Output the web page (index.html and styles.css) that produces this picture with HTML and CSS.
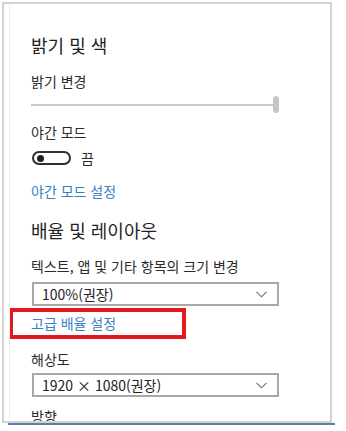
FILE: index.html
```html
<!DOCTYPE html>
<html lang="ko">
<head>
<meta charset="utf-8">
<link rel="stylesheet" href="styles.css">
</head>
<body>
<div class="window">
  <div class="content">
    <h1 class="heading first">밝기 및 색</h1>
    <div class="label l-bright">밝기 변경</div>
    <div class="slider">
      <div class="track"></div>
      <div class="thumb"></div>
    </div>
    <div class="label l-night">야간 모드</div>
    <div class="toggle-row">
      <span class="toggle"><span class="dot"></span></span>
      <span class="toggle-text">끔</span>
    </div>
    <a class="link l-nightset">야간 모드 설정</a>
    <h1 class="heading second">배율 및 레이아웃</h1>
    <div class="label l-text">텍스트, 앱 및 기타 항목의 크기 변경</div>
    <div class="select s-scale">
      <span>100%(권장)</span>
      <svg class="chev" width="11" height="7" viewBox="0 0 11 7"><path d="M0.5 0.8 L5.5 5.8 L10.5 0.8" fill="none" stroke="#6f6f6f" stroke-width="1.1"/></svg>
    </div>
    <div class="highlight"><a class="link">고급 배율 설정</a></div>
    <div class="label l-res">해상도</div>
    <div class="select s-res">
      <span>1920 × 1080(권장)</span>
      <svg class="chev" width="11" height="7" viewBox="0 0 11 7"><path d="M0.5 0.8 L5.5 5.8 L10.5 0.8" fill="none" stroke="#6f6f6f" stroke-width="1.1"/></svg>
    </div>
    <div class="label l-dir">방향</div>
  </div>
</div>
<div class="underline"></div>
</body>
</html>
```

FILE: styles.css
```css
html, body {
  margin: 0;
  padding: 0;
  background: #ffffff;
}
body {
  font-family: "Noto Sans CJK KR", "Noto Sans", sans-serif;
  color: #2a2a2a;
}
.window {
  margin: 2px 0 0 2px;
  border: 2px solid #d2d2d2;
  padding-left: 5px;
  box-sizing: content-box;
  width: 321px;
}
.content {
  border-left: 1px solid #efefef;
  height: 417px;
  overflow: hidden;
  padding-left: 21px;
}
.underline {
  margin-left: 8px;
  width: 327px;
  height: 2px;
  background: #5f80ab;
}
.heading {
  margin: 0;
  font-size: 18px;
  font-weight: 400;
  line-height: 24px;
  color: #1f1f1f;
}
.heading.first { margin-top: 29px; }
.heading.second { margin-top: 17px; }
.label {
  font-size: 14px;
  line-height: 20px;
  color: #2a2a2a;
}
.l-bright { margin-top: 14px; }
.l-night { margin-top: 9px; }
.l-text { margin-top: 14px; }
.l-res { margin-top: 10px; }
.l-dir { margin-top: 9px; }
.slider {
  margin-top: 5px;
  width: 248px;
  height: 17px;
  display: flex;
  align-items: center;
}
.track {
  flex: 1;
  height: 2px;
  background: #c9c9c9;
}
.thumb {
  width: 6px;
  height: 17px;
  border-radius: 3px;
  background: #c6c6c6;
}
.toggle-row {
  margin-top: 9px;
  display: flex;
  align-items: center;
  margin-left: 1px;
  height: 14px;
}
.toggle {
  width: 39px;
  height: 14px;
  box-sizing: border-box;
  border: 2px solid #2e2e2e;
  border-radius: 7px;
  display: flex;
  align-items: center;
  padding-left: 3px;
}
.dot {
  width: 7px;
  height: 7px;
  border-radius: 50%;
  background: #1f1f1f;
}
.toggle-text {
  margin-left: 10px;
  font-size: 14px;
  line-height: 20px;
}
.link {
  display: block;
  font-size: 14px;
  line-height: 20px;
  color: #3680c2;
  text-decoration: none;
}
.l-nightset { margin-top: 16px; }
.select {
  margin-left: 1px;
  width: 247px;
  height: 24px;
  box-sizing: border-box;
  border: 2px solid #a8a8a8;
  display: flex;
  align-items: center;
  justify-content: space-between;
  padding: 0 10px 0 8px;
  font-size: 14px;
  color: #222;
}
.s-scale { margin-top: 6px; }
.s-res { margin-top: 4px; }
.chev { display: block; }
.highlight {
  margin-top: 2px;
  margin-left: -22px;
  width: 177px;
  height: 31px;
  box-sizing: border-box;
  border: 4px solid #e2191f;
  padding-left: 18px;
}
.highlight .link {
  line-height: 23px;
}
```
